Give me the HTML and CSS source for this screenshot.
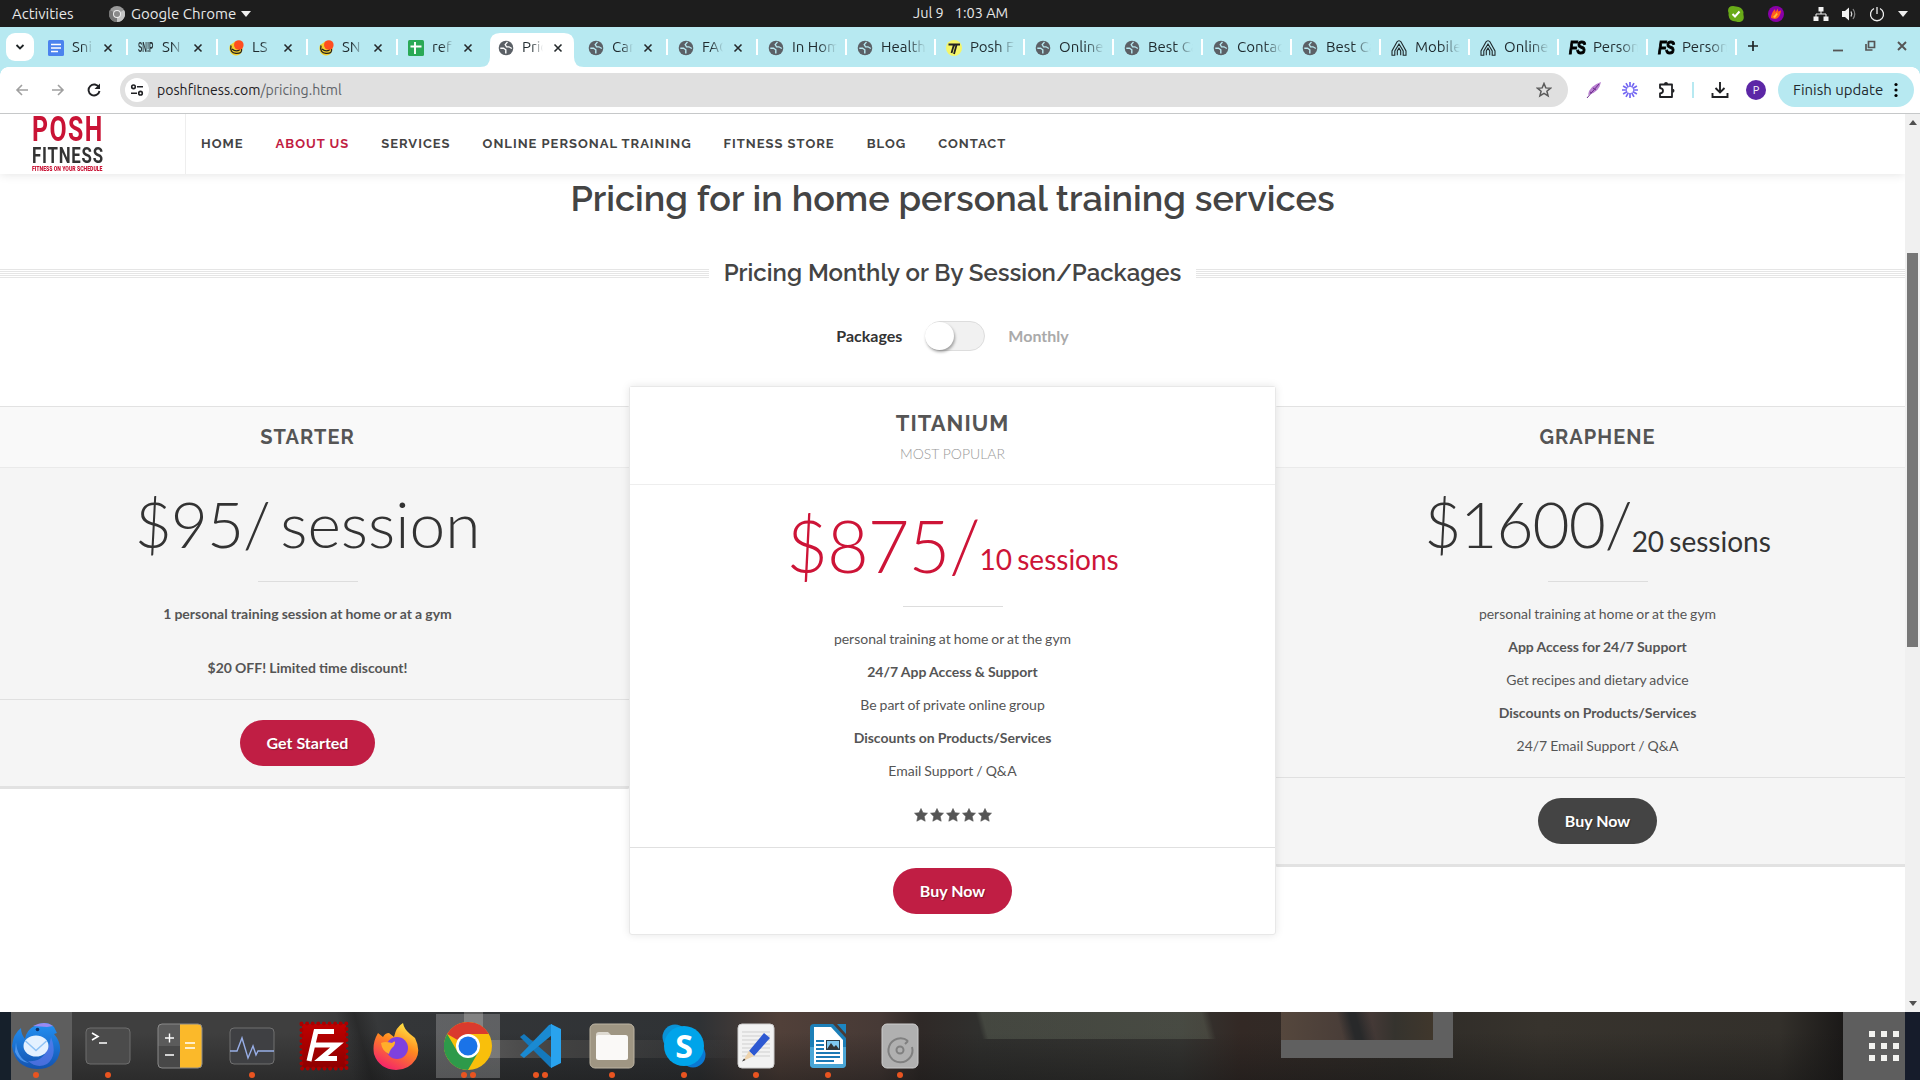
FILE: index.html
```html
<!DOCTYPE html>
<html lang="en">
<head>
<meta charset="utf-8">
<title>Pricing</title>
<link rel="stylesheet" href="styles.css">
</head>
<body>
<svg class="defs" width="0" height="0">
  <symbol id="globe" viewBox="0 0 16 16"><circle cx="8" cy="8" r="7.3" fill="#5b6066"/><path d="M2.300 8.200H5.500L7.800 9.800V13.600" fill="none" stroke="currentColor" stroke-width="1.400"/><path d="M9.500 2 7.200 4.500 8.500 6.800H11L13.800 8.500" fill="none" stroke="currentColor" stroke-width="1.300"/></symbol>
  <symbol id="x" viewBox="0 0 10 10"><path d="M1.500 1.500 8.500 8.500M8.500 1.500 1.500 8.500" stroke="#24292b" stroke-width="1.6" fill="none"/></symbol>
  <symbol id="peak" viewBox="0 0 16 16"><path d="M1 15.300V11L5.800 2.200Q8-.800 10.200 2.200L15 11V15.300H12.200V11L8 4 3.800 11V15.300ZM6.300 15.300V11L8 8 9.700 11V15.300" fill="none" stroke="#20282b" stroke-width="1.100"/></symbol>
  <symbol id="yolk" viewBox="0 0 16 16"><path d="M2 5C0 10 3 15.500 8 15.500S15 11 14.500 6L8 1Z" fill="#f3cf2c"/><path d="M3 5.500Q1.500 13 8 13.400T13.500 9M4 9Q8 12.500 12 9.500" fill="none" stroke="#222" stroke-width="1.300"/><circle cx="10.800" cy="5" r="4.800" fill="#ff4d1f"/></symbol>
  <symbol id="star" viewBox="0 0 14 14"><path d="M7 .5 9 4.700 13.500 5.200 10.200 8.400 11.200 13.200 7 11 2.800 13.200 3.800 8.400 .5 5.200 5 4.700Z" fill="#555" stroke="#555" stroke-width=".6"/></symbol>
</svg>

<div class="topbar">
  <span class="activities">Activities</span>
  <svg width="16" height="16" viewBox="0 0 16 16"><circle cx="8" cy="8" r="8" fill="#999"/><path d="M8 8 15 4A8 8 0 0 1 8 16Z" fill="#c4c4c4"/><path d="M8 8 1 4A8 8 0 0 0 8 16Z" fill="#777"/><circle cx="8" cy="8" r="4" fill="#eee"/><circle cx="8" cy="8" r="3" fill="#8a8a8a"/></svg>
  <span class="app">Google Chrome</span>
  <svg width="10" height="6" viewBox="0 0 10 6"><path d="M0 0H10L5 6Z" fill="#eee"/></svg>
  <div class="clock"><span>Jul 9</span><span>1:03 AM</span></div>
  <div class="tray">
    <svg width="16" height="16" viewBox="0 0 16 16"><path d="M5 0Q0 0 0 5 1 7 .5 9 1 15.500 8 15.500 9 16 12 16 16 15 15.800 11 15 8 15.500 6 14 .8 8 .5Z" fill="#69ab18"/><path d="M4.500 8 7 10.500 11.500 5.500" fill="none" stroke="#fff" stroke-width="2"/></svg>
    <svg class="flame" width="16" height="16" viewBox="0 0 16 16"><circle cx="8" cy="8" r="8" fill="#8a00a8"/><path d="M3 12Q3 7 7 3L7.500 6 10 2.500 10 5.500 13 4.500Q12 13 6.500 13Z" fill="#ff5a1f"/><path d="M5 11 9 6.500 9.500 8.500 7 12Z" fill="#ffc32c"/></svg>
    <svg class="net" width="16" height="16" viewBox="0 0 16 16" fill="#f2f2f2"><path d="M5.500 1h5v4.500h-5zM.5 10.500h5V15h-5zM10.500 10.500h5V15h-5z"/><path d="M8 5V8M3 11V8H13V11" fill="none" stroke="#f2f2f2"/></svg>
    <svg class="vol" width="16" height="16" viewBox="0 0 16 16"><path d="M1 5H4L8 1.500V14.500L4 11H1Z" fill="#f2f2f2"/><path d="M10 5.500Q11.500 8 10 10.500" fill="none" stroke="#ddd" stroke-width="1.300"/><path d="M12 3Q15.500 8 12 13" fill="none" stroke="#888" stroke-width="1.200"/></svg>
    <svg class="pow" width="16" height="16" viewBox="0 0 16 16"><path d="M5 2.500A6.500 6.500 0 1 0 11 2.500M8 1V8" fill="none" stroke="#eee" stroke-width="1.300"/></svg>
    <svg class="dn" width="10" height="6" viewBox="0 0 10 6"><path d="M0 0H10L5 6Z" fill="#eee"/></svg>
  </div>
</div>

<div class="tabs">
  <div class="search"><svg width="10" height="10" viewBox="0 0 10 10"><path d="M1.500 3 5 6.500 8.500 3" fill="none" stroke="#1f2426" stroke-width="1.800"/></svg></div>
  <div class="tab"><svg width="16" height="16" viewBox="0 0 16 16"><rect width="16" height="16" rx="1.500" fill="#4b83ee"/><path d="M3 4.500H13M3 8H13M3 11.500H10" stroke="#fff" stroke-width="1.700"/></svg><b>Sni</b><svg class="c"><use href="#x"/></svg></div>
  <div class="tab"><span class="snp">SN!P</span><b>SN</b><svg class="c"><use href="#x"/></svg></div>
  <div class="tab"><svg width="16" height="16"><use href="#yolk"/></svg><b>LS</b><svg class="c"><use href="#x"/></svg></div>
  <div class="tab"><svg width="16" height="16"><use href="#yolk"/></svg><b>SN</b><svg class="c"><use href="#x"/></svg></div>
  <div class="tab last"><svg width="16" height="16" viewBox="0 0 16 16"><rect width="16" height="16" rx="1.500" fill="#2aa956"/><path d="M7 2V14M2.500 6.500H13.500" stroke="#fff" stroke-width="1.900"/></svg><b>ref</b><svg class="c"><use href="#x"/></svg></div>
  <div class="tab active"><svg class="g" width="16" height="16"><use href="#globe"/></svg><b>Pric</b><svg class="c"><use href="#x"/></svg></div>
  <div class="tab"><svg class="g" width="16" height="16"><use href="#globe"/></svg><b>Care</b><svg class="c"><use href="#x"/></svg></div>
  <div class="tab"><svg class="g" width="16" height="16"><use href="#globe"/></svg><b>FAQ</b><svg class="c"><use href="#x"/></svg></div>
  <div class="tab wide"><svg class="g" width="16" height="16"><use href="#globe"/></svg><b>In Home</b></div>
  <div class="tab wide"><svg class="g" width="16" height="16"><use href="#globe"/></svg><b>Health</b></div>
  <div class="tab wide"><svg width="16" height="16" viewBox="0 0 16 16"><circle cx="8" cy="8" r="8" fill="#f4f66a"/><path d="M2.500 4.500H8L5.500 13M7 8 8.500 4.500H14M10.500 5 8 14" stroke="#222" stroke-width="1.800" fill="none"/></svg><b>Posh Fit</b></div>
  <div class="tab wide"><svg class="g" width="16" height="16"><use href="#globe"/></svg><b>Online</b></div>
  <div class="tab wide"><svg class="g" width="16" height="16"><use href="#globe"/></svg><b>Best Ca</b></div>
  <div class="tab wide"><svg class="g" width="16" height="16"><use href="#globe"/></svg><b>Contact</b></div>
  <div class="tab wide"><svg class="g" width="16" height="16"><use href="#globe"/></svg><b>Best Ca</b></div>
  <div class="tab wide"><svg width="16" height="16"><use href="#peak"/></svg><b>Mobile</b></div>
  <div class="tab wide"><svg width="16" height="16"><use href="#peak"/></svg><b>Online</b></div>
  <div class="tab wide"><span class="fs">FS</span><b>Person</b></div>
  <div class="tab wide"><span class="fs">FS</span><b>Person</b></div>
  <svg class="plus" width="12" height="12" viewBox="0 0 12 12"><path d="M6 1V11M1 6H11" stroke="#1f2426" stroke-width="1.700"/></svg>
  <div class="win">
    <svg width="12" height="12" viewBox="0 0 12 12"><path d="M1 10.500H11" stroke="#555" stroke-width="1.800"/></svg>
    <svg width="12" height="12" viewBox="0 0 12 12"><path d="M4.500 1.500H10.500V7.500H4.500ZM2 4V10H8.500" fill="none" stroke="#555" stroke-width="1.700"/></svg>
    <svg width="12" height="12" viewBox="0 0 12 12"><path d="M2 2 10 10M10 2 2 10" stroke="#555" stroke-width="1.900"/></svg>
  </div>
</div>

<div class="toolbar">
  <svg width="14" height="14" viewBox="0 0 14 14"><path d="M13 7H2M7 2 2 7 7 12" fill="none" stroke="#a0a0a0" stroke-width="1.600"/></svg>
  <svg class="fwd" width="14" height="14" viewBox="0 0 14 14"><path d="M1 7H12M7 2 12 7 7 12" fill="none" stroke="#a0a0a0" stroke-width="1.600"/></svg>
  <svg class="rel" width="14" height="14" viewBox="0 0 14 14"><path d="M12 4.500A5.500 5.500 0 1 0 12.500 8" fill="none" stroke="#202124" stroke-width="1.900"/><path d="M13 .5V6H7.500Z" fill="#202124"/></svg>
  <div class="omni">
    <span class="site"><svg width="14" height="14" viewBox="0 0 14 14" fill="none" stroke="#202124" stroke-width="1.600"><circle cx="3.500" cy="3.800" r="1.800"/><path d="M7 3.800H13M1 10.200H7"/><circle cx="10.500" cy="10.200" r="1.800"/></svg></span>
    <span class="url">poshfitness.com<i>/pricing.html</i></span>
    <svg width="16" height="16" viewBox="0 0 16 16"><path d="M8 1.500 9.800 5.900 14.500 6.200 10.900 9.200 12.100 13.900 8 11.300 3.900 13.900 5.100 9.200 1.500 6.200 6.200 5.900Z" fill="none" stroke="#5a5a5a" stroke-width="1.500"/></svg>
  </div>
  <svg class="quill" width="16" height="18" viewBox="0 0 16 18"><path d="M2 14Q3 5 15 1Q13 11 4 13Z" fill="#b87fd0"/><path d="M1 17 13 3M4 11 6 12M7 7 10 9" stroke="#6c2b8c" fill="none"/></svg>
  <svg class="burst" width="16" height="16" viewBox="-8 -8 16 16"><path d="M0-8V-3M0 8V3M-8 0H-3M8 0H3M4-6.900 1.600-2.700M-4-6.900-1.600-2.700M4 6.900 1.600 2.700M-4 6.900-1.600 2.700M6.900-4 2.700-1.600M-6.900-4-2.700-1.600M6.900 4 2.700 1.600M-6.900 4-2.700 1.600" stroke="#7468f2" stroke-width="1.700"/></svg>
  <svg class="puz" width="18" height="18" viewBox="0 0 18 18"><path d="M2 3.500H14V16H2V12.500Q5 12 5 9.700T2 7Z" fill="none" stroke="#202124" stroke-width="1.800" stroke-linejoin="round"/><path d="M6 3A2 2 0 0 1 10 3ZM14.500 7.700A2 2 0 0 1 14.500 11.700Z" fill="#202124"/></svg>
  <span class="bar"></span>
  <svg class="dl" width="18" height="18" viewBox="0 0 18 18"><path d="M9 1V11M4.500 7 9 11.500 13.500 7M1.500 12V16H16.500V12" fill="none" stroke="#202124" stroke-width="1.900"/></svg>
  <span class="avatar">P</span>
  <span class="update">Finish update<svg width="4" height="16" viewBox="0 0 4 16"><circle cx="2" cy="2.500" r="1.600"/><circle cx="2" cy="8" r="1.600"/><circle cx="2" cy="13.500" r="1.600"/></svg></span>
</div>

<div class="view">
  <div class="page">
    <header class="site-head">
      <div class="logo"><span class="l1">POSH</span><span class="l2">FITNESS</span><span class="l3">FITNESS ON YOUR SCHEDULE</span></div>
      <nav><a>HOME</a><a class="on">ABOUT US</a><a>SERVICES</a><a>ONLINE PERSONAL TRAINING</a><a>FITNESS STORE</a><a>BLOG</a><a>CONTACT</a></nav>
    </header>
    <h1>Pricing for in home personal training services</h1>
    <div class="fancy"><i></i><h2>Pricing Monthly or By Session/Packages</h2><i></i></div>
    <div class="switch"><span>Packages</span><div class="track"><div class="knob"></div></div><span class="off">Monthly</span></div>
    <div class="plans">
      <section class="plan">
        <div class="title"><h3>STARTER</h3></div>
        <div class="price">$95/<span class="per"> session</span></div>
        <ul><li><strong>1 personal training session at home or at a gym</strong></li><li class="gap"><strong>$20 OFF! Limited time discount!</strong></li></ul>
        <div class="action"><a class="btn">Get Started</a></div>
      </section>
      <section class="plan best">
        <div class="title"><h3>TITANIUM</h3><p>MOST POPULAR</p></div>
        <div class="price">$875/<small>10 sessions</small></div>
        <ul><li>personal training at home or at the gym</li><li><strong>24/7 App Access &amp; Support</strong></li><li>Be part of private online group</li><li><strong>Discounts on Products/Services</strong></li><li>Email Support / Q&amp;A</li>
        <li class="stars"><svg><use href="#star"/></svg><svg><use href="#star"/></svg><svg><use href="#star"/></svg><svg><use href="#star"/></svg><svg><use href="#star"/></svg></li></ul>
        <div class="action"><a class="btn">Buy Now</a></div>
      </section>
      <section class="plan">
        <div class="title"><h3>GRAPHENE</h3></div>
        <div class="price">$1600/<small>20 sessions</small></div>
        <ul><li>personal training at home or at the gym</li><li><strong>App Access for 24/7 Support</strong></li><li>Get recipes and dietary advice</li><li><strong>Discounts on Products/Services</strong></li><li>24/7 Email Support / Q&amp;A</li></ul>
        <div class="action"><a class="btn dark">Buy Now</a></div>
      </section>
    </div>
  </div>
  <div class="scroll"><svg width="8" height="5" viewBox="0 0 8 5"><path d="M0 5H8L4 0Z" fill="#505050"/></svg><div class="thumb"></div><svg width="8" height="5" viewBox="0 0 8 5"><path d="M0 0H8L4 5Z" fill="#505050"/></svg></div>
</div>

<div class="dock">
  <div class="app-i"><svg width="50" height="48" viewBox="0 0 50 48"><defs><linearGradient id="tb" x2="0" y2="1"><stop stop-color="#2391f3"/><stop offset="1" stop-color="#1353b0"/></linearGradient></defs><path d="M1 24Q2 12 10 6 10 12 14 17 15 8 25 3 36-2 43 5L46 11 43 12Q50 20 49 29 46 47 26 47 4 46 1 24Z" fill="url(#tb)"/><path d="M22 4Q34-2 42 4L36 5Z" fill="#9a8af2"/><path d="M17 39Q36 41 40 15 47 34 36 42 26 47 17 39Z" fill="#6a7df5" opacity=".6"/><path d="M5 20Q6 36 18 41 8 40 4 30Z" fill="#63a9ff" opacity=".7"/><ellipse cx="25" cy="24" rx="12.500" ry="10.500" fill="#e4f1ff"/><path d="M14.500 19 25 28.500 35.500 19" fill="none" stroke="#8fc2f5" stroke-width="1.500"/><circle cx="26.500" cy="7.500" r="1.800" fill="#0d2f66"/></svg><span class="dots"><i></i></span></div>
  <div class="app-i"><svg width="46" height="38" viewBox="0 0 46 38"><rect x="1" y="1" width="44" height="36" rx="4" fill="#4b4b4b" stroke="#6e6e6e"/><path d="M7 6 13 9.500 7 13M14 16H22" fill="none" stroke="#fff" stroke-width="1.600"/></svg><span class="dots"><i></i></span></div>
  <div class="app-i"><svg width="46" height="46" viewBox="0 0 46 46"><rect x="1" y="1" width="44" height="44" rx="4" fill="#484848"/><path d="M1 5Q1 1 5 1H23V23H1Z" fill="#5b5b5b"/><path d="M23 1H41Q45 1 45 5V41Q45 45 41 45H23Z" fill="#fbb92a"/><rect x="1" y="1" width="44" height="44" rx="4" fill="none" stroke="#8a8a8a"/><path d="M8 15H17M12.500 10.500V19.500M8 32H17M28 20H38M28 25H38" stroke="#fff" stroke-width="1.400"/></svg></div>
  <div class="app-i"><svg width="46" height="38" viewBox="0 0 46 38"><rect x="1" y="1" width="44" height="36" rx="4" fill="#3f4043" stroke="#707070"/><path d="M1 24H8L13 11 19 31 24 19 27 28 29 24H45" fill="none" stroke="#98aee6" stroke-width="1.400"/></svg><span class="dots"><i></i></span></div>
  <div class="app-i"><svg width="50" height="50" viewBox="0 0 50 50"><defs><linearGradient id="fz" x2="0" y2="1"><stop stop-color="#c00000"/><stop offset="1" stop-color="#8e0000"/></linearGradient></defs><rect x="3" y="3" width="44" height="44" fill="url(#fz)"/><rect x="2.500" y="2.500" width="45" height="45" fill="none" stroke="#a80000" stroke-width="4" stroke-dasharray="0 5.600" stroke-linecap="round"/><path d="M35 10.500H17L10 40M14 24H27M25 24H38L22 37.500H38" fill="none" stroke="#fff" stroke-width="5"/></svg></div>
  <div class="app-i"><svg width="48" height="50" viewBox="0 0 48 50"><defs><linearGradient id="ff" x1=".8" y1="0" x2=".3" y2="1"><stop stop-color="#fff04a"/><stop offset=".45" stop-color="#ff8a1f"/><stop offset="1" stop-color="#f4206c"/></linearGradient></defs><path d="M6 12 11 16Q13 12 17 12L22 16Q24 6 31 2 32 8 38 13L43 17Q49 29 44 38 37 49 24 49 7 48 2 33 0 22 6 12Z" fill="url(#ff)"/><circle cx="25" cy="27" r="11" fill="#7e41df"/><path d="M9 22Q13 20 20 22 25 18 22 25 18 28 17 33 10 30 9 22Z" fill="#ffae2b"/></svg></div>
  <div class="app-i sel"><svg width="48" height="50" viewBox="0 0 48 48"><circle cx="24" cy="24" r="24" fill="#f9bf0b"/><path d="M24 24 3.200 12A24 24 0 0 1 44.800 12H24Z" fill="#da3a2e"/><path d="M24 36 13.600 30 3.200 12A24 24 0 0 0 24 48L34.400 30Z" fill="#2e9a4a"/><circle cx="24" cy="24" r="12" fill="#fff"/><circle cx="24" cy="24" r="9.500" fill="#1a73e8"/></svg><span class="dots"><i></i><i></i></span></div>
  <div class="app-i"><svg width="44" height="44" viewBox="0 0 44 44"><path d="M2 13 6 10 34 34V44L32 43Z" fill="#1479bd"/><path d="M2 31 6 34 34 11V0L31 1Z" fill="#1a8ad2"/><path d="M33 0 43 5V39L33 44Z" fill="#29a3ee"/></svg><span class="dots"><i></i><i></i></span></div>
  <div class="app-i"><svg width="46" height="46" viewBox="0 0 46 46"><rect x="1" y="1" width="44" height="44" rx="5" fill="#9f9683" stroke="#bdb5a3"/><path d="M7 12Q7 9 10 9H19L23 13V20H7Z" fill="#dedad1"/><rect x="7" y="12" width="32" height="25" rx="2.500" fill="#faf9f7"/></svg><span class="dots"><i></i></span></div>
  <div class="app-i"><svg width="44" height="44" viewBox="0 0 44 44"><circle cx="13" cy="13" r="12.500" fill="#0a92d6"/><circle cx="31" cy="31" r="12.500" fill="#0a78d2"/><circle cx="22" cy="22" r="20" fill="#00a4ea"/></svg><span class="sk">S</span><span class="dots"><i></i></span></div>
  <div class="app-i"><svg width="38" height="46" viewBox="0 0 38 46"><rect x="1" y="1" width="36" height="44" rx="4" fill="#f2f2f2" stroke="#cfcfcf"/><path d="M5 9H33M5 13H33M5 17H33M5 21H33M5 25H33M5 29H33M5 33H33" stroke="#cfcfcf"/><path d="M12 28 27 10 33 15 17 33Z" fill="#2e59d2"/><path d="M12 28 17 33 6 38Z" fill="#eed3ad"/><path d="M7 35.500 8.500 37 5 38.500Z" fill="#333"/></svg><span class="dots"><i></i></span></div>
  <div class="app-i"><svg width="38" height="46" viewBox="0 0 38 46"><path d="M5 1H24L37 15V41Q37 45 33 45H5Q1 45 1 41V5Q1 1 5 1Z" fill="#1c7fb8"/><path d="M1 24H37V41Q37 45 33 45H5Q1 45 1 41Z" fill="#4aa6d6"/><path d="M28 1H37V11Z" fill="#1c86c2"/><path d="M5 4H22L34 17V41H5Z" fill="#fff"/><path d="M7 18H15M7 22H15M7 26H15M7 30H31M7 34H31M7 38H25" stroke="#1c79b5" stroke-width="2"/><rect x="17.500" y="17.500" width="13" height="9" fill="#7fc8f0" stroke="#2b3a44"/><path d="M18 26 22 20 25 24 27 22 30 26Z" fill="#333"/></svg><span class="dots"><i></i></span></div>
  <div class="app-i"><svg width="38" height="46" viewBox="0 0 38 46"><rect x="1" y="1" width="36" height="44" rx="5" fill="#b0b0b0" stroke="#cdcdcd"/><path d="M27 18A12 12 0 1 0 31 24M27 18 24 21" fill="none" stroke="#808080" stroke-width="2"/><circle cx="19" cy="27" r="3.500" fill="none" stroke="#808080" stroke-width="2"/></svg><span class="dots"><i></i></span></div>
  <svg class="grid" width="32" height="32" viewBox="0 0 32 32" fill="#f3f3f0"><path d="M1 1h6v6H1zM13 1h6v6h-6zM25 1h6v6h-6zM1 13h6v6H1zM13 13h6v6h-6zM25 13h6v6h-6zM1 25h6v6H1zM13 25h6v6h-6zM25 25h6v6h-6z"/></svg>
</div>
</body>
</html>
```
FILE: styles.css
```css
* { box-sizing: border-box; }
body { margin: 0; width: 1920px; height: 1080px; overflow: hidden; background: #fff; font-family: Lato, sans-serif; display: flex; flex-direction: column; }
svg { display: block; flex: none; }
.defs { position: absolute; }

/* desktop top bar */
.topbar { height: 27px; background: #1d1d1d; color: #e8e8e8; font: 15px/27px Ubuntu, "Noto Sans", sans-serif; display: grid; grid-template-columns: 97px 34px 110px 10px 1fr auto; align-items: center; padding-right: 15px; position: relative; }
.activities { padding-left: 12px; }
.topbar > svg:first-of-type { justify-self: start; margin-left: 12px; }
.clock { position: absolute; left: 913px; top: -1px; display: flex; gap: 11px; font-size: 14.500px; }
.tray { grid-column: 6; display: flex; align-items: center; margin-right: -3px; }
.flame { margin-left: 24px; }
.net { margin-left: 29px; }
.vol { margin-left: 12px; }
.pow { margin-left: 12px; }
.dn { margin-left: 13px; }

/* tab strip */
.tabs { height: 40px; background: #b7e9f1; display: flex; align-items: flex-start; padding: 6px 12px 0 6px; font: 15px/28px Ubuntu, "Noto Sans", sans-serif; color: #1f2a2e; }
.search { width: 28px; height: 28px; border-radius: 9px; background: #fff; display: flex; align-items: center; justify-content: center; margin-right: 4px; }
.tab { width: 90px; height: 34px; padding: 0 0 5px 10px; display: flex; align-items: center; position: relative; }
.tab::after { content: ""; position: absolute; right: 0; top: 6px; width: 2px; height: 16px; background: #fff; }
.tab b { font-weight: 400; margin-left: 8px; width: 21px; line-height: 26px; margin-bottom: 1px; overflow: hidden; white-space: nowrap; -webkit-mask: linear-gradient(90deg, #000 45%, transparent); mask: linear-gradient(90deg, #000 45%, transparent); }
.tab .c { width: 10px; height: 10px; margin-left: 10px; }
.g { color: #b7e9f1; }
.active .g { color: #fff; }
.tab.wide { width: 89px; }
.tab.wide b { width: 45px; -webkit-mask: linear-gradient(90deg, #000 60%, transparent); mask: linear-gradient(90deg, #000 60%, transparent); }
.tab.last::after, .tab.active::after { display: none; }
.tab.active::before { content: ""; position: absolute; left: -8px; right: -10px; top: 0; bottom: 0; clip-path: path("M0 34Q10 34 10 24V10Q10 0 20 0H84Q94 0 94 10V24Q94 34 104 34Z"); background: #fff; }
.tab.active > * { position: relative; }
.snp { width: 16px; font: 700 14px/15px "Liberation Sans", sans-serif; color: #2a3438; transform: scaleX(.46); transform-origin: left; white-space: nowrap; }
.snp + b { position: relative; }
.fs { width: 16px; font: italic 700 18px/18px "Liberation Sans", sans-serif; letter-spacing: -1.500px; color: #000; -webkit-text-stroke: 1px #000; transform: scaleX(.78); transform-origin: left; }
.plus { margin: 7px 0 0 10px; }
.win { margin: 7px 0 0 auto; display: flex; gap: 20px; }

/* toolbar */
.toolbar { height: 47px; background: #fff; border-bottom: 1px solid #c6c8c9; display: flex; align-items: center; padding: 0 6px 0 15px; position: relative; font-family: Ubuntu, "Noto Sans", sans-serif; }
.toolbar::before, .toolbar::after { content: ""; position: absolute; top: 0; width: 8px; height: 8px; background: radial-gradient(circle at 100% 100%, #fff 7.500px, #b7e9f1 8px); left: 0; }
.toolbar::after { left: auto; right: 0; transform: scaleX(-1); }
.fwd { margin-left: 22px; }
.rel { margin-left: 22px; }
.omni { margin-left: 19px; width: 1448px; height: 34px; border-radius: 17px; background: #e0e0e0; display: flex; align-items: center; padding: 0 16px 0 5px; }
.site { width: 24px; height: 24px; border-radius: 50%; background: #fff; display: flex; align-items: center; justify-content: center; }
.url { flex: 1; margin-left: 8px; font-size: 14.100px; color: #1f2124; }
.url i { font-style: normal; color: #5f6368; }
.quill { margin-left: 18px; }
.burst { margin-left: 20px; }
.puz { margin-left: 20px; }
.bar { width: 2px; height: 16px; background: #b7e9f1; margin-left: 16px; }
.dl { margin-left: 17px; }
.avatar { width: 20px; height: 20px; border-radius: 50%; background: #5c27a6; color: #fff; font-size: 11px; line-height: 20px; text-align: center; margin-left: 17px; }
.update { margin-left: 12px; width: 136px; height: 34px; border-radius: 17px; background: #b7e9f1; color: #1f2a2e; font-size: 15px; line-height: 34px; padding-left: 15px; display: flex; align-items: center; gap: 11px; }

/* browser viewport */
.view { height: 898px; display: flex; }
.page { width: 1905px; overflow: hidden; }
.scroll { width: 15px; background: #f0f0f0; display: flex; flex-direction: column; align-items: center; padding: 6px 0; }
.thumb { width: 11px; height: 394px; margin: 128px 0 auto; background: #777; }
.site-head { height: 60px; display: flex; box-shadow: 0 0 10px rgba(0,0,0,.12); position: relative; background: #fff; }
.logo { width: 186px; border-right: 1px solid #eee; padding: 1px 0 0 32px; color: #c91335; font-family: Roboto, sans-serif; font-weight: 700; display: flex; flex-direction: column; }
.logo span { transform-origin: left center; white-space: nowrap; width: 0; }
.l1 { font-size: 35px; line-height: 30px; letter-spacing: 2px; transform: scaleX(.71); }
.l2 { font-size: 22px; line-height: 21px; color: #333; letter-spacing: 1px; transform: scaleX(.765); }
.l3 { font-size: 7px; line-height: 6px; font-weight: 900; transform: scaleX(.735); }
nav { display: flex; gap: 32px; padding-left: 15px; font: 700 13px/60px Raleway, Lato, sans-serif; color: #444; letter-spacing: 1px; }
.on { color: #c11e43; }
h1, h2, h3, p, ul { margin: 0; padding: 0; font-weight: inherit; }
h1 { font: 600 36px/54px Raleway, Lato, sans-serif; color: #444; text-align: center; margin-top: -3px; }
.fancy { display: flex; align-items: center; gap: 15px; height: 36px; margin-top: 30px; }
.fancy i { flex: 1; height: 9px; background: repeating-linear-gradient(#e5e5e5 0 1px, #fff 1px 2px); }
.fancy h2 { font: 600 24px/36px Raleway, Lato, sans-serif; color: #444; }
.switch { display: flex; align-items: center; justify-content: center; gap: 23px; height: 30px; margin-top: 30px; font: 700 16px/30px Lato, sans-serif; color: #333; }
.track { width: 60px; height: 30px; border: 1px solid #ddd; border-radius: 15px; background: #f1f1f1; }
.knob { width: 29px; height: 28px; margin-left: -1px; border-radius: 50%; background: #fff; box-shadow: 1px 2px 3px rgba(0,0,0,.35); }
.off { color: #aaa; }
.plans { display: grid; grid-template-columns: 645px 645px 645px; margin: 35px -15px 0; align-items: start; }
.plan { margin-top: 20px; background: #f5f5f5; border: 1px solid #e2e2e2; border-bottom-width: 3px; border-radius: 3px; text-align: center; }
.title { background: #f9f9f9; border-bottom: 1px solid #eaeaea; height: 61px; }
.title h3 { font: 700 20px/60px Raleway, Lato, sans-serif; letter-spacing: 1px; color: #555; }
.title p { font: 300 14px/21px Lato, sans-serif; color: #999; padding-top: 2px; }
.price { height: 114px; font: 300 64px/106px Lato, sans-serif; letter-spacing: -1px; color: #333; position: relative; padding-top: 3px; white-space: nowrap; }
.price::after { content: ""; position: absolute; left: 50%; bottom: 0; width: 100px; height: 1px; margin-left: -50px; background: #ddd; }
.per { letter-spacing: 0; word-spacing: -7px; }
.price small { font: 400 28px/28px Lato, sans-serif; letter-spacing: 0; word-spacing: -2px; vertical-align: -4px; }
ul { list-style: none; padding: 15px 0; font: 14px/33px Lato, sans-serif; color: #555; word-spacing: -.6px; }
strong { font-weight: 700; word-spacing: -.3px; }
.gap { margin-top: 21px; }
.action { border-top: 1px solid #e0e0e0; height: 87px; padding-top: 20px; }
.btn { display: inline-block; height: 46px; border-radius: 23px; background: #c01e44; color: #fff; font: 700 16px/46px Lato, sans-serif; padding: 0 26.500px; text-shadow: 1px 1px 1px rgba(0,0,0,.3); }
.btn.dark { background: #444; }
.best { margin: 0 -1px; background: #fff; border: 1px solid #e8e8e8; box-shadow: 0 0 8px rgba(0,0,0,.1); position: relative; }
.best .title { background: #fff; height: 98px; padding-top: 18px; border-color: #eee; }
.best .title h3 { font-size: 22px; line-height: 36px; }
.best .price { font-size: 72px; height: 122px; line-height: 115px; color: #cd1437; }
.best small { vertical-align: 3px; }
.best ul { padding-bottom: 0; }
.stars { display: flex; justify-content: center; gap: 2px; height: 60px; padding-top: 21px; }
.stars svg { width: 14px; height: 14px; }

/* dock over the wallpaper */
.dock { height: 68px; position: relative; display: flex; align-items: center; background:
  linear-gradient(90deg, #16202b 11px, #5e5e5e 11px 72px, transparent 72px),
  linear-gradient(90deg, transparent 1843px, #5e5e5e 1843px 1905px, #161c2b 1905px),
  linear-gradient(#606060, #606060) 1433px 0 / 20px 44px no-repeat,
  linear-gradient(#606060, #606060) 1281px 28px / 172px 18px no-repeat,
  linear-gradient(#606060, #606060) 464px 0 / 19px 46px no-repeat,
  linear-gradient(90deg, #5b5b5b, #414141 100px, rgba(50,50,50,0)) 464px 28px / 300px 18px no-repeat,
  linear-gradient(75deg, transparent 18px, #28292a 30px 36px, transparent 50px) 1325px 0 / 70px 28px no-repeat,
  linear-gradient(90deg, #55473d, #443936 60%, #35332e 75%, #40372c) 1281px 0 / 152px 28px no-repeat,
  linear-gradient(75deg, transparent 12px, rgba(120,130,110,.28) 18px 230px, transparent 238px) 970px 0 / 250px 27px no-repeat,
  linear-gradient(75deg, transparent 42px, rgba(20,20,20,.4) 60px, transparent 80px) 310px 0 / 110px 68px no-repeat,
  linear-gradient(transparent 30%, rgba(20,20,20,.45)),
  linear-gradient(90deg, #3f3f3f 310px, #343638 400px, #2f3235 700px, #514039 780px, #473a36 880px, #2f2927 920px, #30302e 980px, #353532 1180px, #332925 1240px, #2e2b27 1400px, #37332d 1540px, #33302b 1780px, #1b1918 1843px); }
.app-i { width: 72px; height: 68px; display: flex; align-items: center; justify-content: center; position: relative; flex: none; }
.sel { background: linear-gradient(rgba(255,255,255,.22), rgba(255,255,255,.22)) center / 64px 64px no-repeat; }
.dots { position: absolute; left: 0; right: 0; bottom: 2px; display: flex; justify-content: center; gap: 3px; }
.dots i { width: 6px; height: 6px; border-radius: 50%; background: #e95420; }
.sk { position: absolute; font: 700 32px/44px "Open Sans", sans-serif; color: #fff; }
.grid { margin: 0 20px 0 auto; }
```
